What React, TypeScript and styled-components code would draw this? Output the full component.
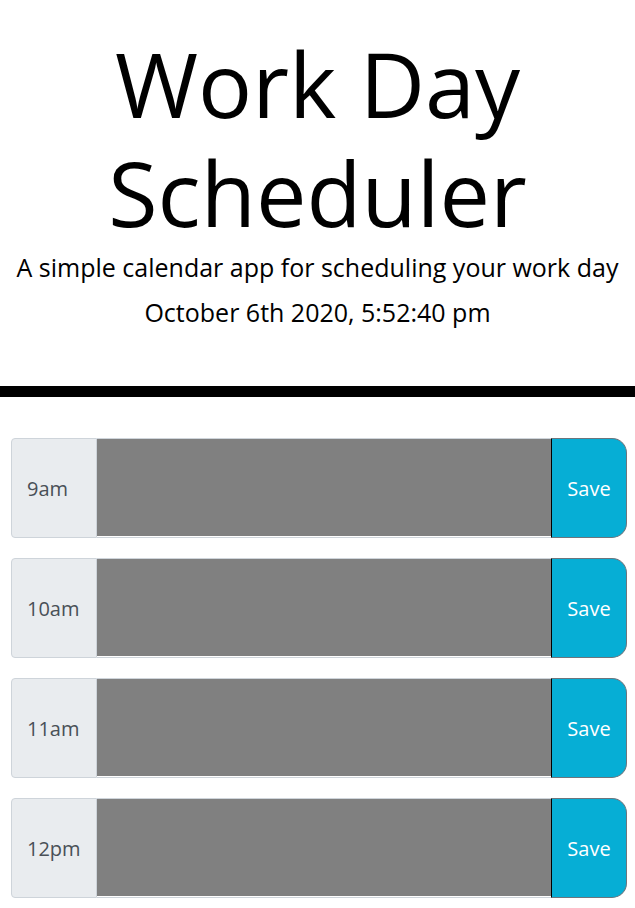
import React, { FC } from 'react'
import styled, { createGlobalStyle } from 'styled-components'

const hours = ['9am', '10am', '11am', '12pm']

const App: FC = () => {
  return (
    <>
      <GlobalStyle />
      <Header>
        <Title>Work Day Scheduler</Title>
        <Lead>A simple calendar app for scheduling your work day</Lead>
        <Lead>October 6th 2020, 5:52:40 pm</Lead>
      </Header>
      <Container>
        {hours.map((hour) => (
          <TimeBlock key={hour}>
            <Hour>{hour}</Hour>
            <Notes />
            <SaveBtn>Save</SaveBtn>
          </TimeBlock>
        ))}
      </Container>
    </>
  )
}

export default App

const GlobalStyle = createGlobalStyle`
  body {
    margin: 0;
    font-family: 'Open Sans', 'Noto Sans', sans-serif;
    color: #000;
    background: #fff;
  }
`

const Header = styled.header`
  padding: 29px 0 59px;
  text-align: center;
  border-bottom: 11px solid #000;
`

const Title = styled.h1`
  margin: 0 auto 5px;
  max-width: 440px;
  font-size: 90px;
  font-weight: 400;
  line-height: 109px;
`

const Lead = styled.p`
  margin: 0 0 15px;
  font-size: 25px;
  line-height: 30px;
  white-space: nowrap;
  &:last-child {
    margin-bottom: 0;
  }
`

const Container = styled.main`
  display: flex;
  flex-direction: column;
  gap: 20px;
  padding: 41px 8px 20px 11px;
`

const TimeBlock = styled.div`
  display: grid;
  grid-template-columns: 86px 1fr 76px;
  height: 100px;
`

const Hour = styled.div`
  display: flex;
  align-items: center;
  padding-left: 15px;
  background: #e9ecef;
  border: 1px solid #ced4da;
  border-radius: 4px 0 0 4px;
  color: #495057;
  font-size: 20px;
`

const Notes = styled.textarea`
  margin: 0;
  padding: 10px;
  resize: none;
  background: #808080;
  border: none;
  border-top: 1px solid #ced4da;
  border-bottom: 1px solid #ced4da;
  box-shadow: inset 0 -1px 0 #fff;
  font-family: inherit;
  outline: none;
`

const SaveBtn = styled.button`
  margin: 0;
  padding: 0;
  background: #06aed5;
  color: #fff;
  border: 1px solid #6c757d;
  border-left-color: #000;
  border-radius: 0 15px 15px 0;
  font-family: inherit;
  font-size: 20px;
  cursor: pointer;
`
